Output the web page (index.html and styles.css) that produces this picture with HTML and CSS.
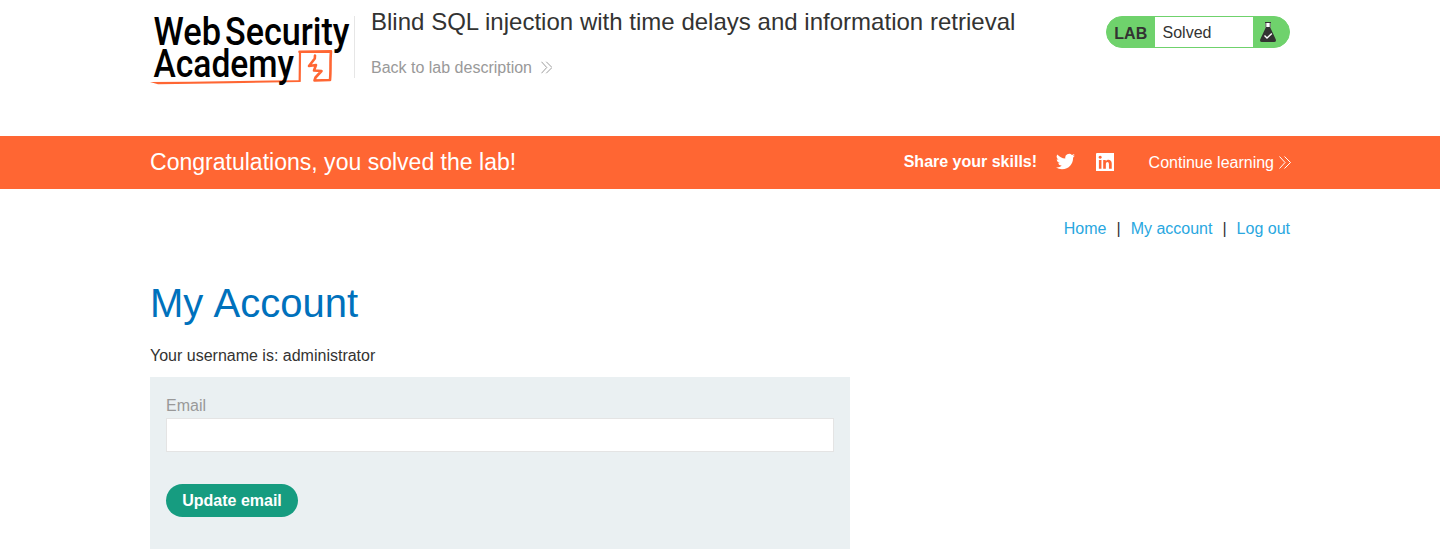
FILE: index.html
```html
<!DOCTYPE html>
<html lang="en">
<head>
<meta charset="utf-8">
<title>Blind SQL injection with time delays and information retrieval</title>
<link rel="stylesheet" href="styles.css">
</head>
<body>
<header class="lab-header container">
  <svg class="logo" viewBox="150 8 204 80" role="img" aria-label="Web Security Academy">
    <g fill="none" stroke="#ff6633" stroke-linejoin="round" stroke-linecap="round">
      <path stroke-width="2.200" d="M299.700 81L300 52"/>
      <path stroke-width="2.600" d="M299.500 51.800L331 51.400C330 62 331 70 330 80L314.500 80.500L315.500 77.500L321.500 71L314 70.500L316 65L309 66L314.800 58.500L315 55.500"/>
    </g>
    <path fill="#ff6633" d="M150 82L190 81.800L270 80.500L300 80.200L300.500 82L230 83.200L158 84.200Z"/>
    <g class="logo-text">
      <text x="153.500" y="44.500" textLength="67.500" lengthAdjust="spacingAndGlyphs">Web</text>
      <text x="225" y="44.500" textLength="124.500" lengthAdjust="spacingAndGlyphs">Security</text>
      <text x="153.500" y="77" textLength="140.500" lengthAdjust="spacingAndGlyphs">Academy</text>
    </g>
  </svg>
  <div class="title">
    <h2>Blind SQL injection with time delays and information retrieval</h2>
    <a class="back" href="#">Back to lab description
      <svg class="chevrons" viewBox="0 0 12 13"><path d="M0.500 0.500L6 6.500L0.500 12.500M5.500 0.500L11.500 6.500L5.500 12.500"/></svg>
    </a>
  </div>
  <div class="status">
    <span class="status-label">LAB</span>
    <span class="status-value">Solved</span>
    <svg class="flask" viewBox="0 0 16 20">
      <path fill="#fff" d="M5.500 1H10.500V6H5.500Z"/>
      <path fill="#333332" d="M5 0H11V1H10.500V6L15.800 17.500Q16.500 20 14 20H2Q-0.500 20 0.200 17.500L5.500 6V1H5ZM6.300 1V5H9.700V1Z" fill-rule="evenodd"/>
      <path fill="none" stroke="#fff" stroke-width="1.400" d="M4.500 13.500L7 16L11.800 11.500"/>
    </svg>
  </div>
</header>
<section class="banner">
  <div class="container banner-inner">
    <h4>Congratulations, you solved the lab!</h4>
    <span class="share">Share your skills!</span>
    <svg class="social twitter" viewBox="0 0 24 24"><path fill="#fff" d="M23.950 4.570a10 10 0 0 1-2.820.770 4.960 4.960 0 0 0 2.160-2.720c-.950.560-2 .960-3.130 1.180a4.920 4.920 0 0 0-8.380 4.480C7.690 8.100 4.070 6.130 1.640 3.160a4.920 4.920 0 0 0 1.520 6.570 4.900 4.900 0 0 1-2.230-.610v.060c0 2.390 1.700 4.380 3.950 4.830a5 5 0 0 1-2.210.080 4.940 4.940 0 0 0 4.600 3.420A9.870 9.870 0 0 1 0 19.540a13.990 13.990 0 0 0 7.550 2.210c9.050 0 14-7.500 14-13.980l-.020-.640a9.940 9.940 0 0 0 2.420-2.560z"/></svg>
    <svg class="social linkedin" viewBox="0 0 18 18"><path fill="#fff" fill-rule="evenodd" d="M1 0H17Q18 0 18 1V17Q18 18 17 18H1Q0 18 0 17V1Q0 0 1 0ZM2.800 6.800V15.300H5.300V6.800ZM4.050 2.600A1.500 1.500 0 1 0 4.060 2.600ZM7 6.800V15.300H9.600V11C9.600 8 12.600 8.100 12.600 11V15.300H15.300V10.300C15.300 6 11 5.700 9.500 8V6.800Z"/></svg>
    <a class="continue" href="#">Continue learning
      <svg class="chevrons" viewBox="0 0 12 13"><path d="M0.500 0.500L6 6.500L0.500 12.500M5.500 0.500L11.500 6.500L5.500 12.500"/></svg>
    </a>
  </div>
</section>
<main class="container">
  <nav class="links"><a href="#">Home</a><span>|</span><a href="#">My account</a><span>|</span><a href="#">Log out</a></nav>
  <h1>My Account</h1>
  <p class="username">Your username is: administrator</p>
  <form class="login-form">
    <label for="email">Email</label>
    <input id="email" type="email">
    <button type="button">Update email</button>
  </form>
</main>
</body>
</html>
```
FILE: styles.css
```css
* { box-sizing: border-box; }
body {
  margin: 0;
  font: 16px/20px "Liberation Sans", Arial, sans-serif;
  color: #333332;
  background: #fff;
  overflow: hidden;
}
a { text-decoration: none; }
h1, h2, h4, p { margin: 0; font-weight: 400; }
.container { width: 1140px; margin: 0 auto; }
.lab-header { display: flex; align-items: flex-start; height: 136px; }
.logo { width: 204px; height: 80px; margin-top: 8px; flex: none; overflow: visible; }
.logo-text { font: 500 38px Roboto, sans-serif; fill: #000; }
.title { position: relative; padding: 8px 0 0 17px; flex: 1; }
.title::before {
  content: "";
  position: absolute;
  left: 0;
  top: 16px;
  width: 1px;
  height: 62px;
  background: #e6e6e6;
}
.title h2 { font-size: 24px; line-height: 28px; letter-spacing: 0.016px; }
.back { display: flex; align-items: center; gap: 9px; margin-top: 22px; color: #999; }
.chevrons { width: 12px; height: 13px; margin-bottom: 1px; fill: none; stroke: currentColor; stroke-width: 1; flex: none; }
.back .chevrons { width: 11.5px; margin-bottom: 2px; }
.status {
  display: flex;
  align-items: center;
  width: 184px;
  height: 32px;
  margin-top: 16px;
  border: 1px solid #6fd26c;
  border-radius: 16px;
  background: #6fd26c;
}
.status-label { width: 48px; padding: 3px 0 0 7.3px; font-weight: 700; }
.status-value { width: 98px; height: 30px; padding-left: 7.5px; line-height: 32px; background: #fff; }
.flask { width: 16px; height: 20px; margin-left: 7px; }
.banner { height: 53px; background: #ff6633; color: #fff; }
.banner-inner { display: flex; align-items: center; height: 53px; }
.banner h4 { flex: 1; font-size: 23.04px; line-height: 27px; }
.share { font-weight: 700; margin: 0 19px 2px 0; }
.social { flex: none; }
.twitter { width: 19px; height: 19px; margin: 0 20.5px 2px 0; }
.linkedin { width: 18.5px; height: 18.5px; margin: 0 34.5px 1px 0; }
.continue { display: flex; align-items: center; gap: 4.5px; margin-right: -0.5px; color: #fff; }
.links { display: flex; justify-content: flex-end; gap: 10px; padding-top: 30px; }
.links a { color: #29a7df; }
h1 { margin-top: 41px; color: #0071bc; font-size: 40px; line-height: 46px; word-spacing: 1.3px; }
.username { margin-top: 20px; }
.login-form { width: 700px; height: 172px; margin-top: 11px; padding: 19px 16px; background: #eaf0f2; }
.login-form label { display: block; color: #999; }
.login-form input { display: block; width: 668px; height: 34px; margin-top: 2px; border: 1px solid #e4e4e4; background: #fff; }
.login-form button {
  width: 132px;
  height: 33px;
  margin-top: 32px;
  padding: 0;
  border: 0;
  border-radius: 17px;
  background: #169c80;
  color: #fff;
  font: 700 16px/33px "Liberation Sans", Arial, sans-serif;
}
```
